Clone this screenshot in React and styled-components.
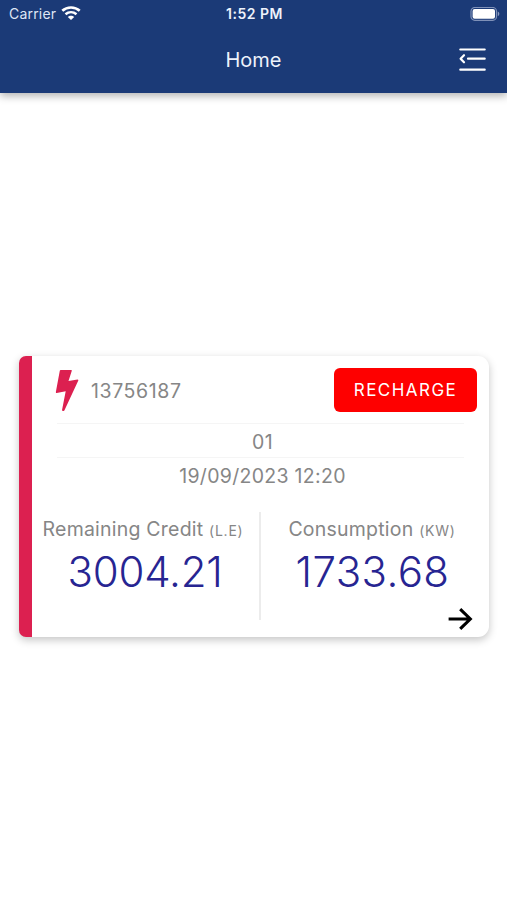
import React from 'react';
import styled, { createGlobalStyle } from 'styled-components';

const GlobalStyle = createGlobalStyle`
    * {
        box-sizing: border-box;
    }

    body {
        margin: 0;
        background-color: #fff;
        font-family: Inter, 'Liberation Sans', sans-serif;
    }
`;

const Screen = styled.div`
    display: flex;
    flex-direction: column;
    height: 900px;
    overflow: hidden;
`;

const Header = styled.header`
    height: 93px;
    background-color: #1b3a77;
    color: #fff;
    box-shadow: 0 3px 8px rgba(0, 0, 0, 0.3);
`;

const StatusBar = styled.div`
    display: grid;
    grid-template-columns: 1fr auto 1fr;
    align-items: center;
    height: 27px;
    padding: 0 7px 0 9px;
    font-size: 14px;
    line-height: 28px;
`;

const Carrier = styled.div`
    display: flex;
    align-items: center;
    gap: 5px;
    color: #dfe6f5;
    letter-spacing: 0.2px;

    svg {
        margin-top: -2px;
    }
`;

const Time = styled.div`
    color: #eef2fb;
    font-size: 14px;
    font-weight: 600;
    letter-spacing: 0.5px;
`;

const Battery = styled.svg`
    justify-self: end;
`;

const NavBar = styled.div`
    display: grid;
    grid-template-columns: 1fr auto 1fr;
    align-items: center;
    height: 66px;
    padding: 0 21px;

    h1 {
        grid-column: 2;
        margin: 0;
        color: #eef2fb;
        font-size: 20px;
        font-weight: 400;
        letter-spacing: 0;
    }
`;

const MenuButton = styled.button`
    display: flex;
    justify-self: end;
    padding: 0;
    border: none;
    background: none;
    color: #fff;
`;

const Main = styled.main`
    flex: 1;
    display: flex;
    align-items: center;
    padding: 0 18px 0 19px;
`;

const Card = styled.section`
    flex: 1;
    height: 281px;
    border-left: 13px solid #dc2050;
    border-radius: 7px 11px 11px 7px;
    background-color: #fff;
    box-shadow: 0 3px 8px rgba(0, 0, 0, 0.23);
    color: #868686;
    font-size: 19.5px;
    letter-spacing: 0.5px;
`;

const CardTop = styled.div`
    display: flex;
    align-items: center;
    height: 67px;
    padding: 1px 12px 0 23px;
`;

const MeterNumber = styled.span`
    flex: 1;
    margin-left: 12px;
    padding-top: 1px;
    letter-spacing: 0.6px;
`;

const RechargeButton = styled.button`
    width: 143px;
    height: 44px;
    padding: 0;
    border: none;
    border-radius: 6px;
    background-color: #fe0000;
    color: #fff;
    font-family: inherit;
    font-size: 17px;
    letter-spacing: 1.45px;
`;

const InfoRow = styled.div`
    height: ${({ $height }) => $height}px;
    margin: 0 25px;
    border-top: 1px solid #f5f5f5;
    line-height: 37px;
    letter-spacing: 0.3px;
    text-align: center;
    text-indent: 4px;
`;

const Readings = styled.div`
    display: flex;
    height: 108px;
    margin-top: 19px;
`;

const Reading = styled.div`
    width: ${({ $width }) => $width}px;
    padding-top: 4px;
    text-align: center;
    white-space: nowrap;

    & + & {
        border-left: 2px solid #ececec;
    }
`;

const Label = styled.div`
    padding-right: ${({ $inset }) => $inset || 0}px;
    line-height: 26px;
    letter-spacing: 0.22px;

    small {
        font-size: 14px;
        letter-spacing: 0.75px;
    }
`;

const Value = styled.div`
    padding-right: 1px;
    color: #272592;
    font-size: 42px;
    font-weight: 300;
    line-height: 55px;
    letter-spacing: ${({ $spacing }) => $spacing}px;
`;

const CardFooter = styled.div`
    display: flex;
    justify-content: flex-end;
    margin-top: -12px;
    padding-right: 15px;
`;

const WifiIcon = () => (
    <svg width="20" height="14" viewBox="0 0 20 14" fill="none" stroke="#fff">
        <path d="M1.3 4.8C6.2 .4 13.8 .4 18.7 4.8" strokeWidth="2.7" />
        <path d="M4.5 8.3c3.3-2.9 7.7-2.9 11 0" strokeWidth="2.5" />
        <path d="M10 14 6.8 10.9c1.7-1.7 4.7-1.7 6.4 0z" fill="#fff" stroke="none" />
    </svg>
);

const BatteryIcon = () => (
    <Battery width="30" height="15" viewBox="0 0 30 15">
        <rect x="1" y="0.5" width="25.5" height="12.8" rx="3.8" fill="none" stroke="#7f91b8" strokeWidth="1.2" />
        <rect x="2.6" y="2.1" width="22.4" height="9.6" rx="2" fill="#fff" />
        <path d="M27.8 4.5v4.6c2-.8 2-3.8 0-4.6z" fill="#8b9bc0" />
    </Battery>
);

const MenuIcon = () => (
    <svg width="27" height="24" viewBox="0 0 27 24" fill="none" stroke="currentColor" strokeWidth="2.2" strokeLinecap="round">
        <path d="M1.3 1.5h24.4M9 10.7h16.7M1.3 21.7h24.4" />
        <path d="M5 7.2 1.6 10.7 5 14.3" strokeLinejoin="round" />
    </svg>
);

const BoltIcon = () => (
    <svg width="24" height="42" viewBox="0 0 24 42" fill="#dc2050">
        <path d="M5.7 1h10.5q.8 0 .6.8l-3.3 10.2 9-1.5q1.2 0 .7 1.3L9.6 41q-.6 1.3-2 1-.7-.3-.5-1.3l3.6-18.4-9 1.8Q.7 24.1 .9 22.8L4.8 1.8Q5 1 5.7 1z" />
    </svg>
);

const ArrowIcon = () => (
    <svg width="26" height="22" viewBox="0 0 26 22" fill="none" stroke="#000" strokeWidth="3.1">
        <path d="M.6 11h22M12.2 1.2 22.3 11l-10.1 9.8" />
    </svg>
);

const App = () => {
    return (
        <Screen>
            <GlobalStyle />
            <Header>
                <StatusBar>
                    <Carrier>
                        Carrier
                        <WifiIcon />
                    </Carrier>
                    <Time>1:52 PM</Time>
                    <BatteryIcon />
                </StatusBar>
                <NavBar>
                    <h1>Home</h1>
                    <MenuButton aria-label="Menu">
                        <MenuIcon />
                    </MenuButton>
                </NavBar>
            </Header>

            <Main>
                <Card>
                    <CardTop>
                        <BoltIcon />
                        <MeterNumber>13756187</MeterNumber>
                        <RechargeButton>RECHARGE</RechargeButton>
                    </CardTop>
                    <InfoRow $height={34}>01</InfoRow>
                    <InfoRow $height={36}>19/09/2023 12:20</InfoRow>
                    <Readings>
                        <Reading $width={227}>
                            <Label $inset={5}>Remaining Credit <small>(L.E)</small></Label>
                            <Value $spacing={-0.2}>3004.21</Value>
                        </Reading>
                        <Reading $width={226}>
                            <Label $inset={2}>Consumption <small>(KW)</small></Label>
                            <Value $spacing={0.4}>1733.68</Value>
                        </Reading>
                    </Readings>
                    <CardFooter>
                        <ArrowIcon />
                    </CardFooter>
                </Card>
            </Main>
        </Screen>
    );
};

export default App
